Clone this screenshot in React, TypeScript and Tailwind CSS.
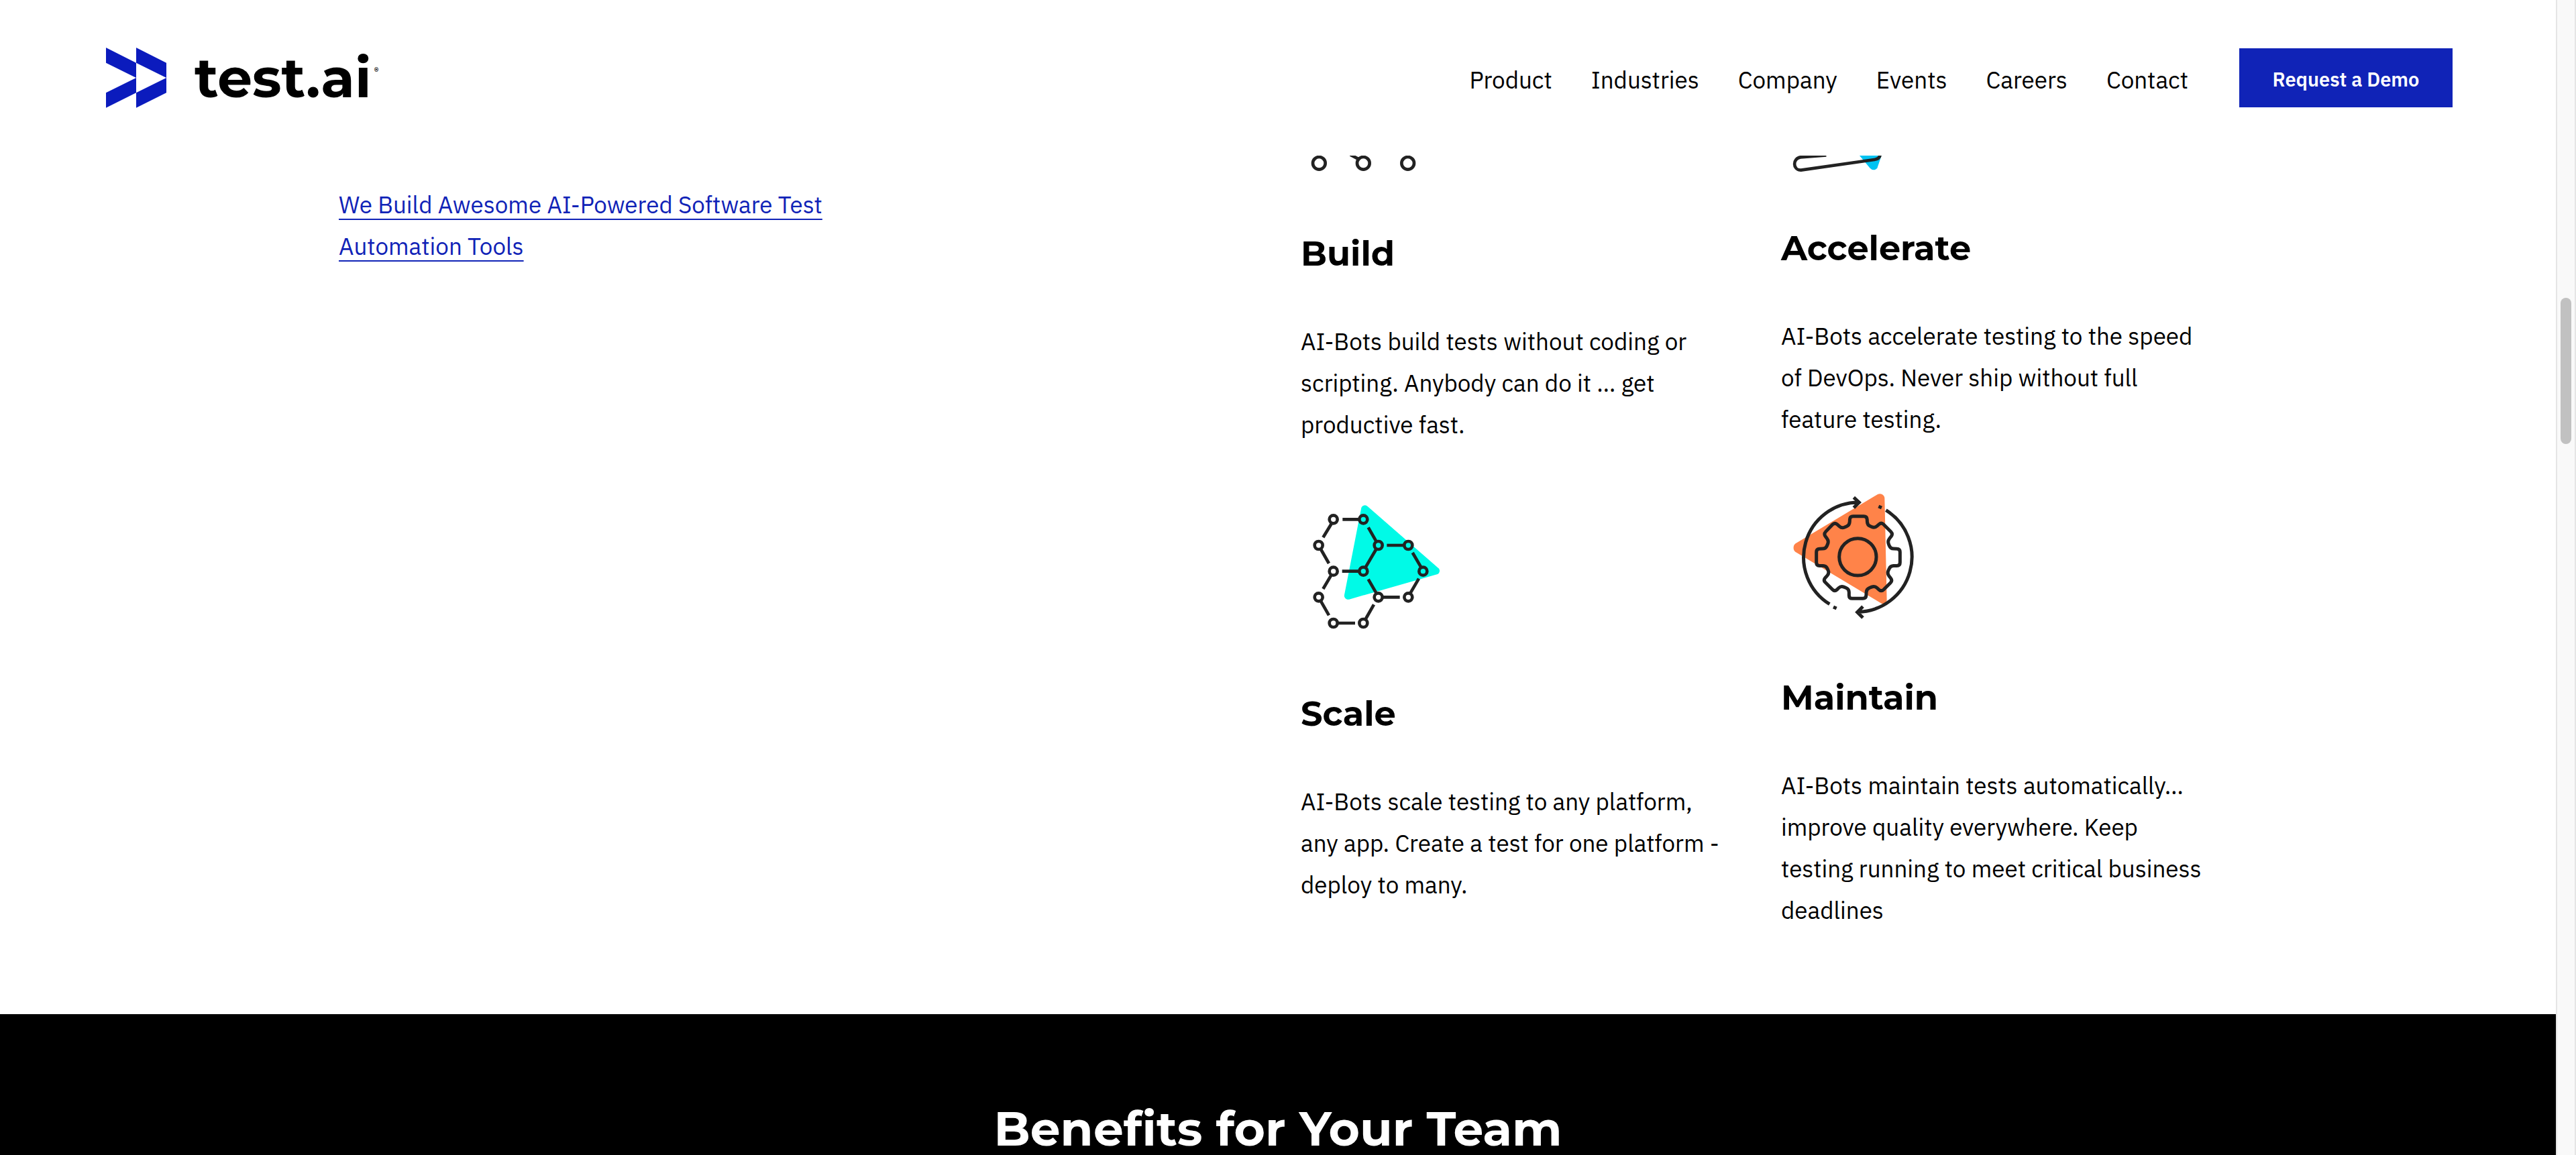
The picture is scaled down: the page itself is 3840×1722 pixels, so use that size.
import React from 'react';

const INK = '#222222';

/* Builds a closed path through the points with softened corners. */
function roundedPath(points: [number, number][], radius: number) {
  const toward = (a: [number, number], b: [number, number]) => {
    const d = Math.hypot(b[0] - a[0], b[1] - a[1]);
    const r = Math.min(radius, d / 2);
    return [a[0] + ((b[0] - a[0]) * r) / d, a[1] + ((b[1] - a[1]) * r) / d];
  };
  return (
    points
      .map((p, i) => {
        const before = toward(p, points[(i + points.length - 1) % points.length]);
        const after = toward(p, points[(i + 1) % points.length]);
        return `${i ? 'L' : 'M'}${before.join(' ')}Q${p.join(' ')} ${after.join(' ')}`;
      })
      .join('') + 'Z'
  );
}

const gear: [number, number][] = [
  [356, 179], [432, 179], [434, 218], [466, 232], [497, 206], [549, 258], [524, 290], [537, 324],
  [580, 325], [580, 400], [537, 401], [522, 435], [547, 467], [497, 517], [466, 490], [430, 505],
  [428, 547], [352, 547], [352, 505], [316, 490], [288, 517], [236, 465], [264, 434], [250, 401],
  [206, 400], [206, 325], [248, 324], [262, 290], [238, 258], [288, 206], [320, 234], [354, 218],
];

const nodes: [number, number][] = [
  [206, 133], [340, 133], [140, 249], [407, 249], [541, 249], [206, 365], [340, 365],
  [607, 365], [140, 481], [407, 481], [541, 481], [206, 597], [340, 597],
];

function BuildIcon() {
  return (
    <svg className="h-[32px] w-[220px]" viewBox="30 36 660 96" fill="none" stroke={INK} strokeWidth="14" aria-hidden="true">
      <circle cx="112" cy="70" r="28" />
      <circle cx="310" cy="70" r="28" />
      <circle cx="509" cy="70" r="28" />
      <path d="M252 32L290 52" />
    </svg>
  );
}

function AccelerateIcon() {
  return (
    <svg className="h-[24px] w-[220px]" viewBox="18 36 660 72" fill="none" aria-hidden="true">
      <path d="M369 36L416 92Q432 108 448 92L467 36Z" fill="#00c3f2" />
      <path d="M220 34L105 43C70 48 68 99 107 101L435 54Q461 50 461 30" stroke={INK} strokeWidth="14" />
    </svg>
  );
}

function ScaleIcon() {
  return (
    <svg className="h-[200px] w-[220px]" viewBox="60 60 660 600" fill="none" aria-hidden="true">
      <path d="M330 86A17 17 0 0 1 359 75L672 348A17 17 0 0 1 664 380L276 491A17 17 0 0 1 255 471Z" fill="#00fae7" />
      <path
        d="M247 133H322M197 153L160 214M150 267L186 330M362 169L398 232M445 249H522M397 267L350 347M245 365H322M560 282L598 347M196 383L160 444M362 401L398 463M588 398L550 463M150 499L186 562M425 481H503M387 514L350 579M225 597H303"
        stroke={INK}
        strokeWidth="14"
      />
      {nodes.map(([x, y]) => (
        <circle key={`${x}-${y}`} cx={x} cy={y} r="18" stroke={INK} strokeWidth="14" />
      ))}
    </svg>
  );
}

function MaintainIcon() {
  return (
    <svg className="h-[200px] w-[220px]" viewBox="48 48 660 600" fill="none" aria-hidden="true">
      <path d="M480 81A21 21 0 0 1 511 97L521 556A17 17 0 0 1 497 569L118 342A24 24 0 0 1 118 298Z" fill="#ff8349" />
      <g stroke={INK} strokeWidth="15">
        <path d={roundedPath(gear, 14)} />
        <circle cx="391" cy="361" r="83" />
        <path d="M265 572A246 246 0 0 1 395 117M373 95L397 117L373 141" />
        <path d="M517 152A246 246 0 0 1 390 607M414 583L389 608L414 633" />
        <path d="M484 135L498 141M282 585L296 591" />
      </g>
    </svg>
  );
}

function Feature({ icon, title, children }: { icon: React.ReactNode; title: string; children: React.ReactNode }) {
  return (
    <article>
      {icon}
      <h2 className="mt-[83px] font-['Montserrat','Inter',sans-serif] text-[51px] leading-[62px] font-bold">{title}</h2>
      <p className="mt-[69px] max-w-[640px] text-[35px] leading-[62px]">{children}</p>
    </article>
  );
}

function Logo() {
  return (
    <a href="#home" className="flex items-center" aria-label="test.ai home">
      <svg className="h-[90px] w-[90px]" viewBox="84 92 270 270" fill="#0b1bbd" aria-hidden="true">
        <path d="M84 92L219 160V227L84 160ZM84 294L219 227V294L84 361ZM219 92L354 160V227L219 160ZM219 294L354 227V294L219 361Z" />
      </svg>
      <span className="ml-[42px] font-['Montserrat','Inter',sans-serif] text-[82px] leading-[90px] font-bold">test.ai</span>
      <span className="mb-5 ml-1 text-[14px] leading-3 font-semibold">®</span>
    </a>
  );
}

const links = ['Product', 'Industries', 'Company', 'Events', 'Careers', 'Contact'];

export default function App() {
  return (
    <div className="flex h-screen overflow-hidden bg-white font-['IBM_Plex_Sans','Roboto',sans-serif] text-black">
      <div className="flex min-w-0 flex-1 flex-col">
        <header className="flex h-[232px] shrink-0 items-center justify-between pr-[154px] pl-[158px]">
          <Logo />
          <div className="flex items-center gap-[76px]">
            <nav className="flex gap-[58px] pt-1.5 text-[35px] leading-[62px]">
              {links.map((label) => (
                <a key={label} href={`#${label.toLowerCase()}`}>{label}</a>
              ))}
            </nav>
            <button className="h-[88px] w-[318px] bg-[#1023b7] pt-1.5 text-[29px] font-semibold text-white">Request a Demo</button>
          </div>
        </header>
        <main className="flex flex-1 flex-col">
          <section className="mx-auto grid w-full max-w-[2800px] grid-cols-[1434fr_716fr_650fr] pb-[124px]">
            <p className="mt-[42px] max-w-[750px] text-[35px] leading-[62px] text-[#1023b7]">
              <a href="#tools" className="underline decoration-2 underline-offset-8 [text-decoration-skip-ink:none]">
                We Build Awesome AI-Powered Software Test Automation Tools
              </a>
            </p>
            <div className="flex flex-col gap-[86px]">
              <Feature icon={<BuildIcon />} title="Build">
                AI-Bots build tests without coding or scripting. Anybody can do it … get productive fast.
              </Feature>
              <Feature icon={<ScaleIcon />} title="Scale">
                AI-Bots scale testing to any platform, any app. Create a test for one platform - deploy to many.
              </Feature>
            </div>
            <div className="flex flex-col gap-[70px]">
              <Feature icon={<AccelerateIcon />} title="Accelerate">
                AI-Bots accelerate testing to the speed of DevOps. Never ship without full feature testing.
              </Feature>
              <Feature icon={<MaintainIcon />} title="Maintain">
                AI-Bots maintain tests automatically… improve quality everywhere. Keep testing running to meet critical business deadlines
              </Feature>
            </div>
          </section>
          <section className="flex-1 bg-black pt-[136px] text-center text-white">
            <h2 className="font-['Montserrat','Inter',sans-serif] text-[71px] leading-[70px] font-bold [font-variant-ligatures:none]">
              Benefits for Your Team
            </h2>
          </section>
        </main>
      </div>
      <div className="flex w-[30px] shrink-0 justify-center border-x-2 border-[#e5e5e5] bg-[#f9f9f9] pt-[444px]" aria-hidden="true">
        <div className="h-[218px] w-4 rounded-full bg-[#c1c1c1]" />
      </div>
    </div>
  );
}
